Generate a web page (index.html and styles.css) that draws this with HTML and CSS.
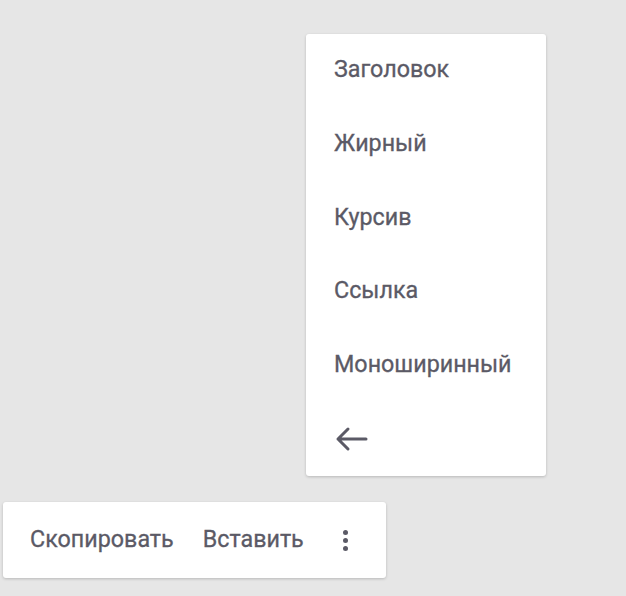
FILE: index.html
```html
<!DOCTYPE html>
<html lang="ru">
<head>
    <meta charset="UTF-8">
    <title>Меню форматирования</title>
    <link rel="stylesheet" href="styles.css">
</head>
<body>

<div class="stage">
    <div class="menu">
        <div class="menu-item">Заголовок</div>
        <div class="menu-item">Жирный</div>
        <div class="menu-item">Курсив</div>
        <div class="menu-item">Ссылка</div>
        <div class="menu-item">Моноширинный</div>
        <div class="menu-item">
            <svg class="back" width="34" height="26" viewBox="0 0 34 26">
                <path d="M3 13H31M3 13L13 3M3 13L13 23" fill="none" stroke="#5b5a66" stroke-width="3" stroke-linecap="round" stroke-linejoin="round"/>
            </svg>
        </div>
    </div>

    <div class="toolbar">
        <span class="tool">Скопировать</span>
        <span class="tool">Вставить</span>
        <span class="more">
            <i></i><i></i><i></i>
        </span>
    </div>
</div>

</body>
</html>
```

FILE: styles.css
```css
* {
    box-sizing: border-box;
    margin: 0;
    padding: 0;
}

body {
    font-family: Roboto, "Noto Sans", sans-serif;
    background: #e6e6e6;
    color: #5b5a66;
    width: 626px;
    height: 596px;
    overflow: hidden;
}

.stage {
    display: flex;
    flex-direction: column;
    align-items: flex-start;
    padding: 34px 0 0 3px;
}

.menu {
    margin-left: 303px;
    width: 240px;
    background: #fff;
    border-radius: 3px;
    box-shadow: 0 1px 3px rgba(0, 0, 0, 0.2);
}

.menu-item {
    height: 73.7px;
    display: flex;
    align-items: center;
    padding: 0 0 3px 28px;
    font-size: 23.3px;
    -webkit-text-stroke: 0.3px #5b5a66;
}

.back {
    margin: 3px 0 0 1px;
}

.toolbar {
    margin-top: 26px;
    width: 383px;
    height: 76px;
    background: #fff;
    border-radius: 3px;
    box-shadow: 0 1px 3px rgba(0, 0, 0, 0.2);
    display: flex;
    align-items: center;
    padding: 0 0 2px 27px;
    font-size: 23.3px;
    -webkit-text-stroke: 0.3px #5b5a66;
}

.tool {
    margin-right: 29px;
}

.more {
    display: flex;
    flex-direction: column;
    gap: 3px;
    margin: 2px 0 0 10px;
}

.more i {
    width: 5px;
    height: 5px;
    border-radius: 50%;
    background: #5b5a66;
}
```
